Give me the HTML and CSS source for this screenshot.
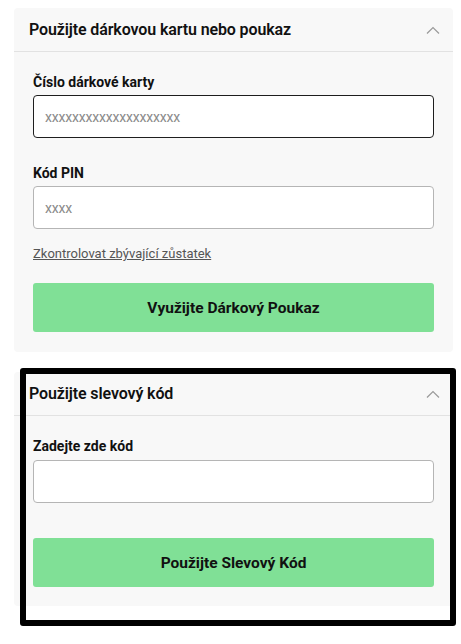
FILE: index.html
```html
<!DOCTYPE html>
<html lang="cs">
<head>
  <meta charset="UTF-8">
  <meta name="viewport" content="width=device-width, initial-scale=1.0">
  <title>Dárková karta a slevový kód</title>
  <link rel="stylesheet" href="styles.css">
</head>
<body>
  <!-- Dárková karta -->
  <section class="panel panel-gift">
    <div class="panel-head">
      <h2>Použijte dárkovou kartu nebo poukaz</h2>
      <svg class="chevron" width="14" height="8" viewBox="0 0 14 8"><polyline points="1,7.5 7,1.5 13,7.5" fill="none" stroke="#9a9a9a" stroke-width="1.2"/></svg>
    </div>
    <div class="panel-body">
      <label for="cardNumber">Číslo dárkové karty</label>
      <input type="text" id="cardNumber" class="field field-focus" placeholder="xxxxxxxxxxxxxxxxxxxx" autocomplete="off">

      <label for="pin" class="label-gap">Kód PIN</label>
      <input type="text" id="pin" class="field" placeholder="xxxx" autocomplete="off">

      <a href="#" class="balance-link">Zkontrolovat zbývající zůstatek</a>

      <button class="btn-green btn-gift">Využijte Dárkový Poukaz</button>
    </div>
  </section>

  <!-- Slevový kód -->
  <div class="discount-wrap">
    <section class="panel panel-discount">
      <div class="panel-head">
        <h2>Použijte slevový kód</h2>
        <svg class="chevron" width="14" height="8" viewBox="0 0 14 8"><polyline points="1,7.5 7,1.5 13,7.5" fill="none" stroke="#9a9a9a" stroke-width="1.2"/></svg>
      </div>
      <div class="panel-body">
        <label for="code">Zadejte zde kód</label>
        <input type="text" id="code" class="field" autocomplete="off">

        <button class="btn-green btn-discount">Použijte Slevový Kód</button>
      </div>
    </section>
    <div class="highlight"></div>
  </div>
</body>
</html>
```

FILE: styles.css
```css
* {
  box-sizing: border-box;
}
body {
  margin: 0;
  padding: 8px 8px 18px 14px;
  background: #fff;
  font-family: Roboto, 'Liberation Sans', Arial, sans-serif;
  color: #111;
}
.panel {
  background: #f8f8f8;
  border-radius: 4px;
}
.panel-head {
  height: 44px;
  display: flex;
  align-items: center;
  justify-content: space-between;
  padding: 0 13px 0 15px;
  border-bottom: 1px solid #e2e2e2;
}
.panel-head h2 {
  margin: 0;
  font-size: 16px;
  font-weight: 600;
  letter-spacing: -0.12px;
  color: #111;
}
.chevron {
  display: block;
}
.panel-body {
  display: flex;
  flex-direction: column;
  padding: 20px 19px 20px 19px;
}
label {
  font-size: 14px;
  line-height: 20px;
  font-weight: 700;
  margin-bottom: 3px;
}
.label-gap {
  margin-top: 25px;
}
.field {
  height: 43px;
  padding: 0 11px;
  border: 1px solid #b5b5b5;
  border-radius: 4px;
  background: #fff;
  font-family: inherit;
  font-size: 14px;
  color: #111;
  outline: none;
}
.field::placeholder {
  color: #8a8a8a;
  letter-spacing: -0.2px;
}
/* pole s kurzorem */
.field-focus {
  border: 1.5px solid #1e1e1e;
}
.balance-link {
  margin-top: 15px;
  font-size: 13px;
  line-height: 20px;
  color: #555;
  text-decoration: underline;
  align-self: flex-start;
}
.btn-green {
  height: 49px;
  border: none;
  border-radius: 3px;
  background: #80e096;
  font-family: inherit;
  font-size: 15.5px;
  font-weight: 700;
  color: #111;
  cursor: pointer;
}
.btn-gift {
  margin-top: 19px;
}
.discount-wrap {
  position: relative;
  margin-top: 20px;
  padding-bottom: 14px;
}
.panel-discount .panel-body {
  padding-bottom: 19px;
}
.panel-discount label {
  margin-bottom: 4px;
}
.btn-discount {
  margin-top: 35px;
}
/* černý rámeček přes sekci */
.highlight {
  position: absolute;
  top: -4px;
  left: 6px;
  right: -3px;
  bottom: -6px;
  border: 6px solid #000;
  border-radius: 3px;
  pointer-events: none;
}
```
